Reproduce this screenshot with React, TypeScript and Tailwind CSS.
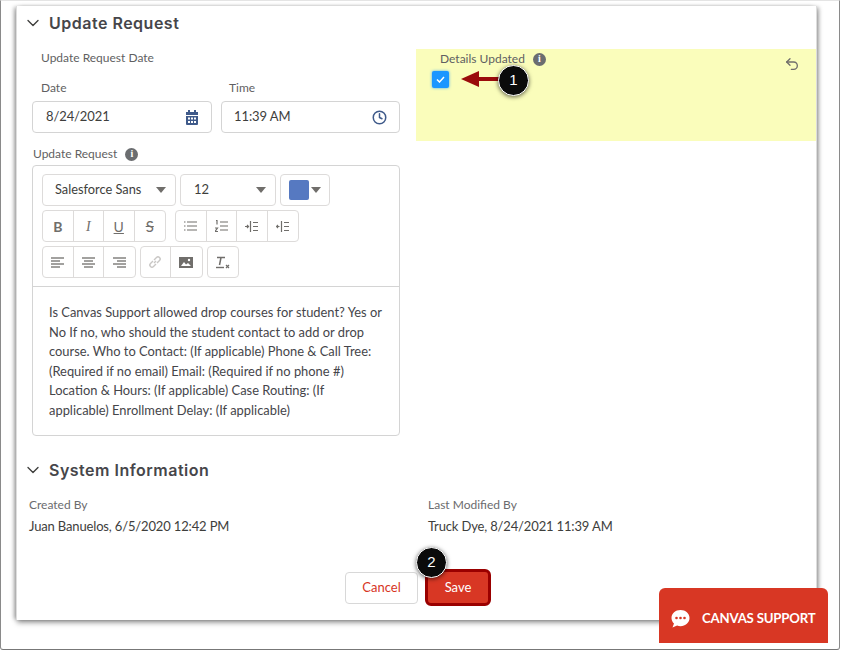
import { ChevronDown, Undo2, Clock } from "lucide-react";
import React from "react";

const SectionTitle = ({ title, top }: { title: string; top: string }) => (
  <div className={`flex items-center pl-[6px] ${top}`}>
    <ChevronDown size={20} strokeWidth={1.6} className="text-[#3e3e3c]" />
    <h2 className="ml-[6px] text-[16px] leading-[20px] font-semibold tracking-[0.5px] text-[#46464a] font-['Inter',sans-serif]">{title}</h2>
  </div>
);

const InfoDot = () => (
  <span className="ml-[8px] flex h-[13px] w-[13px] items-center justify-center rounded-full bg-[#6b6d70] text-[10px] leading-none font-bold text-white font-['Liberation_Serif',serif]">i</span>
);

const Calendar = () => (
  <svg width="14" height="15" viewBox="0 0 14 15" fill="#3f5a8a">
    <rect x="3" y="0" width="2" height="3" />
    <rect x="9" y="0" width="2" height="3" />
    <path d="M1 2h12v3H1z" />
    <path d="M1 6h12v8a1 1 0 0 1-1 1H2a1 1 0 0 1-1-1z" />
    <g fill="#fff">
      <rect x="3" y="7.5" width="2" height="2" />
      <rect x="6" y="7.5" width="2" height="2" />
      <rect x="9" y="7.5" width="2" height="2" />
      <rect x="3" y="11" width="2" height="2" />
      <rect x="6" y="11" width="2" height="2" />
      <rect x="9" y="11" width="2" height="2" />
    </g>
  </svg>
);

const Caret = ({ className }: { className: string }) => (
  <span className={`h-0 w-0 border-x-[5px] border-t-[6px] border-x-transparent border-t-[#706e6b] ${className}`} />
);

const Btn = ({ children, last }: { children: React.ReactNode; last?: boolean }) => (
  <div className={`flex h-[30px] w-[30.5px] items-center justify-center ${last ? "" : "border-r border-[#dddbda]"}`}>{children}</div>
);

const Group = ({ children }: { children: React.ReactNode }) => (
  <div className="flex rounded-[4px] border border-[#dddbda] bg-white">{children}</div>
);

const Lines = ({ rows }: { rows: [number, number][] }) => (
  <svg width="13" height="11" viewBox="0 0 13 11" stroke="#706e6b" strokeWidth="1.3">
    {rows.map(([x, w], i) => (
      <line key={i} x1={x} x2={x + w} y1={1 + i * 3} y2={1 + i * 3} />
    ))}
  </svg>
);

const Marker = ({ n, className }: { n: number; className: string }) => (
  <div className={`absolute flex h-[31px] w-[31px] items-center justify-center rounded-full border border-white bg-[#0b0b0b] text-[15px] text-white shadow-[0_1px_4px_rgba(0,0,0,0.6)] font-['Liberation_Sans',sans-serif] ${className}`}>{n}</div>
);

export default function App() {
  return (
    <div className="relative h-[651px] w-[841px] overflow-hidden bg-white font-['Lato',sans-serif]">
      <div className="h-[650px] w-[840px] rounded-b-[3px] border-x border-b border-t border-x-[#8a8a8a] border-b-[#777] border-t-[#e4e4e4] pl-[15px] pt-[5px]">
        <div className="h-[614px] w-[801px] border-x border-[#ddd] bg-white pt-[7px] shadow-[-3px_0_4px_-1px_rgba(0,0,0,0.3),3px_0_4px_-1px_rgba(0,0,0,0.3),0_4px_5px_-1px_rgba(0,0,0,0.35)]">
          <SectionTitle title="Update Request" top="" />
          <div className="mt-[16px] flex">
            <div className="w-[399px] pl-[15px] pt-[1px]">
              <div className="pl-[9px] text-[12px] leading-[16px] text-[#5f5f62]">Update Request Date</div>
              <div className="mt-[14px] flex gap-[9px]">
                <div className="w-[180px]">
                  <div className="pl-[9px] text-[12px] leading-[16px] text-[#5f5f62]">Date</div>
                  <div className="mt-[5px] flex h-[32px] items-center justify-between rounded-[4px] border border-[#d4d4d4] pl-[13px] pr-[12px] text-[13px] tracking-[-0.1px] text-[#3e3e3c]">
                    8/24/2021
                    <Calendar />
                  </div>
                </div>
                <div className="w-[179px]">
                  <div className="pl-[8px] text-[12px] leading-[16px] text-[#5f5f62]">Time</div>
                  <div className="mt-[5px] flex h-[32px] items-center justify-between rounded-[4px] border border-[#d4d4d4] px-[12px] text-[13px] tracking-[-0.1px] text-[#3e3e3c]">
                    11:39 AM
                    <Clock size={15} strokeWidth={2.4} className="text-[#3f5a8a]" />
                  </div>
                </div>
              </div>
              <div className="mt-[13px] flex items-center pl-[1px] text-[12px] leading-[16px] text-[#5f5f62]">
                Update Request
                <InfoDot />
              </div>
              <div className="mt-[3px] h-[271px] w-[368px] rounded-[4px] border border-[#d4d4d4]">
                <div className="flex h-[121px] flex-col gap-[4px] border-b border-[#d4d4d4] pl-[9px] pt-[8px]">
                  <div className="flex gap-[4px]">
                    <div className="flex h-[32px] w-[134px] items-center justify-between rounded-[4px] border border-[#dddbda] pl-[12px] pr-[9px] text-[12.8px] text-[#3e3e3c]">
                      Salesforce Sans
                      <Caret className="" />
                    </div>
                    <div className="flex h-[32px] w-[96px] items-center justify-between rounded-[4px] border border-[#dddbda] pl-[13px] pr-[9px] text-[13px] text-[#3e3e3c]">
                      12
                      <Caret className="" />
                    </div>
                    <div className="flex h-[32px] w-[50px] items-center rounded-[4px] border border-[#dddbda] pl-[8px]">
                      <span className="h-[20px] w-[20px] rounded-[2px] bg-[#5679c1]" />
                      <Caret className="ml-[2px] border-x-[4px] border-t-[5px]" />
                    </div>
                  </div>
                  <div className="flex gap-[9px]">
                    <Group>
                      <Btn><span className="text-[14px] font-bold text-[#706e6b]">B</span></Btn>
                      <Btn><span className="text-[14px] italic text-[#706e6b] font-['Liberation_Serif',serif]">I</span></Btn>
                      <Btn><span className="text-[14px] text-[#706e6b] underline">U</span></Btn>
                      <Btn last><span className="text-[15px] text-[#706e6b] line-through">S</span></Btn>
                    </Group>
                    <Group>
                      <Btn>
                        <svg width="13" height="10" viewBox="0 0 13 10" stroke="#706e6b" strokeWidth="1.2"><path d="M0 1h1.5M3 1h10M0 5h1.5M3 5h10M0 9h1.5M3 9h10" /></svg>
                      </Btn>
                      <Btn>
                        <svg width="13" height="12" viewBox="0 0 13 12" stroke="#706e6b" strokeWidth="1.2" fill="none"><path d="M1 0.5h1v4M0 8h2.5L0 11.5h3M5 2h8M5 6h8M5 10h8" /></svg>
                      </Btn>
                      <Btn>
                        <svg width="13" height="11" viewBox="0 0 13 11" stroke="#706e6b" strokeWidth="1.2" fill="none"><path d="M0 5.5h3M2 4l1.5 1.5L2 7M5.5 0v11M8 1.5h5M8 5.5h5M8 9.5h5" /></svg>
                      </Btn>
                      <Btn last>
                        <svg width="13" height="11" viewBox="0 0 13 11" stroke="#706e6b" strokeWidth="1.2" fill="none"><path d="M0.5 5.5h3M2 4L0.5 5.5 2 7M5.5 0v11M8 1.5h5M8 5.5h5M8 9.5h5" /></svg>
                      </Btn>
                    </Group>
                  </div>
                  <div className="flex gap-[4px]">
                    <Group>
                      <Btn><Lines rows={[[0, 13], [0, 9], [0, 13], [0, 9]]} /></Btn>
                      <Btn><Lines rows={[[0, 13], [2, 9], [0, 13], [2, 9]]} /></Btn>
                      <Btn last><Lines rows={[[0, 13], [4, 9], [0, 13], [4, 9]]} /></Btn>
                    </Group>
                    <Group>
                      <Btn>
                        <svg width="14" height="14" viewBox="0 0 14 14" stroke="#c9c7c5" strokeWidth="1.4" fill="none"><path d="M6 8l2-2M5 6L2.5 8.5a2.1 2.1 0 0 0 3 3L8 9M6 5l2.5-2.5a2.1 2.1 0 0 1 3 3L9 8" /></svg>
                      </Btn>
                      <Btn last>
                        <svg width="14" height="11" viewBox="0 0 14 11"><path fill="#706e6b" d="M0 0h14v11H0z" /><path fill="#fff" d="M2 9l3-4 2 2.5 2-1.5 3 3z" /><circle cx="10" cy="3" r="1.2" fill="#fff" /></svg>
                      </Btn>
                    </Group>
                    <Group>
                      <Btn last>
                        <svg width="15" height="13" viewBox="0 0 15 13" fill="none" stroke="#706e6b"><path strokeWidth="1.5" d="M2 1.5h8M6 1.5L4.5 9" /><path strokeWidth="1.4" d="M1 11.5h8" /><path strokeWidth="1.2" d="M11 9l3 3M14 9l-3 3" /></svg>
                      </Btn>
                    </Group>
                  </div>
                </div>
                <p className="pl-[16px] pr-[15px] pt-[16px] text-[12.9px] leading-[19.6px] text-[#45454a]">
                  Is Canvas Support allowed drop courses for student? Yes or No If no, who should the student contact to add or drop course. Who to Contact: (If applicable) Phone &amp; Call Tree: (Required if no email) Email: (Required if no phone #) Location &amp; Hours: (If applicable) Case Routing: (If applicable) Enrollment Delay: (If applicable)
                </p>
              </div>
            </div>
            <div className="h-[92px] w-[400px] bg-[#fafdbb] pt-[2px]">
              <div className="flex items-start justify-between pr-[16px]">
                <div className="flex items-center pl-[24px] text-[12px] leading-[16px] text-[#5f5f62]">
                  Details Updated
                  <InfoDot />
                </div>
                <Undo2 size={16} strokeWidth={2} className="mt-[5px] text-[#706e6b]" />
              </div>
              <div className="ml-[16px] -mt-[1px] flex h-[17px] w-[17px] items-center justify-center rounded-[2px] bg-[#1b96ff] shadow-[0_0_3px_rgba(27,150,255,0.8)]">
                <svg width="9" height="7" viewBox="0 0 9 7" fill="none" stroke="#fff" strokeWidth="1.5"><path d="M1 3.5L3.5 6 8 1" /></svg>
              </div>
            </div>
          </div>
          <SectionTitle title="System Information" top="mt-[24px]" />
          <div className="mt-[17px] flex pl-[12px]">
            <div className="w-[399px]">
              <div className="text-[12px] leading-[16px] text-[#6b6b6e]">Created By</div>
              <div className="mt-[4px] text-[13px] leading-[18px] tracking-[-0.15px] text-[#3e3e3c]">Juan Banuelos, 6/5/2020 12:42 PM</div>
            </div>
            <div>
              <div className="text-[12px] leading-[16px] text-[#6b6b6e]">Last Modified By</div>
              <div className="mt-[4px] text-[13px] leading-[18px] tracking-[-0.15px] text-[#3e3e3c]">Truck Dye, 8/24/2021 11:39 AM</div>
            </div>
          </div>
          <div className="mt-[34px] flex items-center gap-[7px] pl-[328px]">
            <div className="flex h-[32px] w-[73px] items-center justify-center rounded-[4px] border border-[#d8d8d8] text-[13px] text-[#d7351f]">Cancel</div>
            <div className="flex h-[37px] w-[66px] items-center justify-center rounded-[6px] border-[3px] border-[#9a0000] bg-[#d83724] text-[13px] text-white">Save</div>
          </div>
        </div>
      </div>

      {/* callouts */}
      <svg className="absolute left-[461px] top-[71px]" width="40" height="16" viewBox="0 0 40 16">
        <path fill="#9a0b0b" d="M0 8L18 0v6h22v4H18v6z" />
      </svg>
      <Marker n={1} className="left-[498px] top-[65px]" />
      <Marker n={2} className="left-[416px] top-[547px]" />

      <div className="absolute left-[659px] top-[588px] flex h-[55px] w-[169px] items-center rounded-t-[6px] bg-[#d83724] pl-[12px] pt-[7px] text-white">
        <svg width="19" height="18" viewBox="0 0 19 18">
          <path fill="#fff" d="M9.5 0C4.5 0 0.5 3.4 0.5 8c0 2.2 1 4.2 2.5 5.6L1.5 17.5l4.6-1.9c1 .4 2.2.6 3.4.6 5 0 9-3.7 9-8.2S14.5 0 9.5 0z" />
          <circle cx="5.5" cy="8" r="1.3" fill="#d83724" />
          <circle cx="9.5" cy="8" r="1.3" fill="#d83724" />
          <circle cx="13.5" cy="8" r="1.3" fill="#d83724" />
        </svg>
        <span className="ml-[12px] text-[13.2px] font-bold tracking-[-0.2px]">CANVAS SUPPORT</span>
      </div>
    </div>
  );
}
